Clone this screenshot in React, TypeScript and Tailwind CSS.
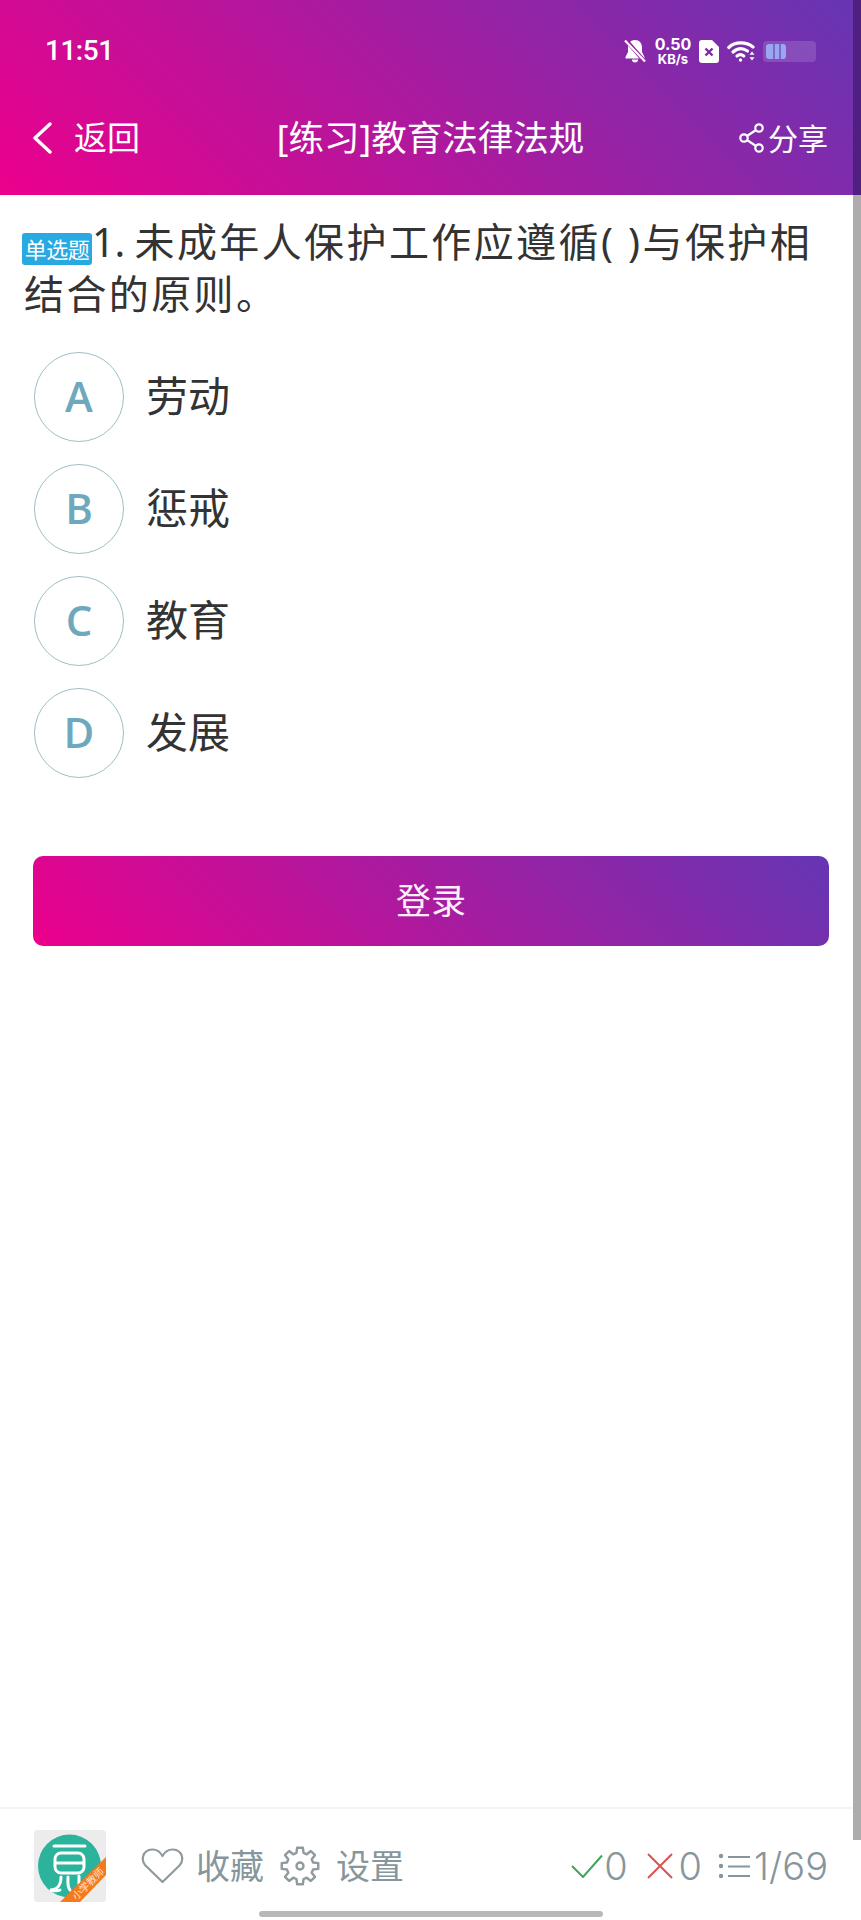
const cjk = "font-['Noto_Sans','Noto_Sans_CJK_SC',sans-serif]";

function BellOff() {
  return (
    <svg width="22" height="24" viewBox="0 0 22 24" fill="white">
      <path d="M11 1C6.500 1 4 4.500 4 8.500V13L1.500 18v1.500h19V18L18 13V8.500C18 4.500 15.500 1 11 1z" />
      <path d="M8 20.500a3 3 0 0 0 6 0z" />
      <path d="M1 0l20 23" stroke="#9a209c" strokeWidth="4" />
      <path d="M1 1.500l20 21" stroke="white" strokeWidth="2.200" />
    </svg>
  );
}

function Sim() {
  return (
    <svg width="20" height="23" viewBox="0 0 20 23">
      <path d="M3 0h10l7 7v13a3 3 0 0 1-3 3H3a3 3 0 0 1-3-3V3a3 3 0 0 1 3-3z" fill="white" />
      <path d="M6.500 8.500l7 7M13.500 8.500l-7 7" stroke="#7c2aa6" strokeWidth="2.400" />
    </svg>
  );
}

function Wifi() {
  return (
    <svg width="28" height="22" viewBox="0 0 28 22" fill="none" stroke="white" strokeWidth="3.200" strokeLinecap="round">
      <path d="M1.800 7.500C8 1.500 19 1.500 26 7" />
      <path d="M6 12c4.500-4 10-4 14.500-1" />
      <path d="M10 16c2.200-1.700 4.500-1.700 6.800 0" />
      <circle cx="13.500" cy="20" r="1.700" fill="white" stroke="none" />
      <path d="M25 11.500l-2.500 3.200h5zM25 20.500l-2.500-3.200h5z" fill="white" stroke="none" />
    </svg>
  );
}

function Battery() {
  return (
    <svg width="53" height="21" viewBox="0 0 53 21">
      <rect width="53" height="21" rx="4" fill="white" fillOpacity="0.14" />
      <rect x="3" y="3" width="20" height="15" rx="3" fill="#9aa6f0" />
      <rect x="10" y="3" width="2" height="15" fill="#7a68d0" />
      <rect x="16" y="3" width="2" height="15" fill="#7a68d0" />
    </svg>
  );
}

function Logo() {
  return (
    <svg width="72" height="72" viewBox="0 0 72 72" className="shrink-0">
      <rect width="72" height="72" rx="4" fill="#ececec" />
      <circle cx="35.500" cy="36" r="31.500" fill="#2bb39b" />
      <g fill="none" stroke="white" strokeWidth="3" strokeLinecap="round">
        <path d="M20 16h31" />
        <rect x="21" y="23" width="29" height="20" rx="6" />
        <path d="M22 33h27" />
        <path d="M27 47c0 8-4 13-11 13c4 1 8 1 10 0" />
        <path d="M34 47c0 6-1 9 2 13M45 46v7c0 3 1 4 3 4" />
      </g>
      <path d="M72 27L26 72H46L72 45z" fill="#f47a1c" />
      <text x="0" y="0" transform="translate(42.500 70.500) rotate(-45)" fontSize="10" fill="#ffe6d2" fontFamily="Noto Sans CJK SC">小学教师</text>
    </svg>
  );
}

function Gear() {
  const teeth = 8;
  const pts: string[] = [];
  for (let i = 0; i < teeth; i++) {
    const a = (i * 360) / teeth - 90;
    const seq: [number, number][] = [
      [13.5, a - 15],
      [18.5, a - 9],
      [18.5, a + 9],
      [13.5, a + 15],
    ];
    for (const [r, d] of seq) {
      const t = (d * Math.PI) / 180;
      pts.push(`${(20 + r * Math.cos(t)).toFixed(2)},${(20 + r * Math.sin(t)).toFixed(2)}`);
    }
  }
  return (
    <svg width="40" height="40" viewBox="0 0 40 40" fill="none" stroke="#8f9a9e" strokeWidth="2.400" strokeLinejoin="round" className="ml-[16px]">
      <polygon points={pts.join(" ")} />
      <circle cx="20" cy="20" r="3.500" />
    </svg>
  );
}

function Heart() {
  return (
    <svg width="43" height="36" viewBox="0 0 43 36" fill="none" stroke="#8f9a9e" strokeWidth="2.200" strokeLinejoin="round">
      <path d="M21.500 34L4.500 17.500C-.500 12 1.500 2 11 1.500c4.500-.2 8 2 10.500 6.500C24 3.500 27.500 1.300 32 1.500c9.500.5 11.500 10.500 6.500 16z" />
    </svg>
  );
}

function CheckIcon() {
  return (
    <svg width="32" height="24" viewBox="0 0 32 24" fill="none" stroke="#3fa45a" strokeWidth="2">
      <path d="M1 12l11 11L31 1.500" />
    </svg>
  );
}

function CrossIcon() {
  return (
    <svg width="26" height="26" viewBox="0 0 26 26" fill="none" stroke="#d9534f" strokeWidth="2">
      <path d="M1 1l24 24M25 1L1 25" />
    </svg>
  );
}

function ListIcon() {
  return (
    <svg width="32" height="26" viewBox="0 0 32 26" fill="none" stroke="#87969c" strokeWidth="2">
      <circle cx="3" cy="3" r="2.200" fill="#87969c" stroke="none" />
      <circle cx="3" cy="13" r="2.200" fill="#87969c" stroke="none" />
      <circle cx="3" cy="23" r="2.200" fill="#87969c" stroke="none" />
      <path d="M10 4h22M10 13.500h22M10 23h22" />
    </svg>
  );
}

const options = [
  ["A", "劳动"],
  ["B", "惩戒"],
  ["C", "教育"],
  ["D", "发展"],
];

export default function App() {
  return (
    <div className={`relative flex h-[1920px] w-full flex-col overflow-hidden bg-white ${cjk}`}>
      <header className="flex h-[195px] flex-col bg-[linear-gradient(45deg,#ec008c,#6536b3)] text-white">
        <div className="flex h-[102px] items-center justify-between px-[45px]">
          <span className="font-['Roboto',sans-serif] text-[28px] font-medium tracking-[-0.500px]">11:51</span>
          <div className="flex items-center">
            <BellOff />
            <div className="ml-[8px] flex w-[38px] flex-col items-center font-['Inter',sans-serif] font-bold leading-none">
              <span className="text-[16px] leading-[17px]">0.50</span>
              <span className="text-[13px] leading-[13px]">KB/s</span>
            </div>
            <div className="ml-[7px]"><Sim /></div>
            <div className="ml-[8px]"><Wifi /></div>
            <div className="ml-[8px]"><Battery /></div>
          </div>
        </div>
        <div className="grid h-[72px] grid-cols-[1fr_auto_1fr] items-center">
          <div className="flex items-center pl-[32px]">
            <svg width="20" height="32" viewBox="0 0 20 32" fill="none" stroke="white" strokeWidth="3.400" strokeLinecap="round" strokeLinejoin="round">
              <path d="M18 2L3 16l15 14" />
            </svg>
            <span className="ml-[22px] text-[33px]">返回</span>
          </div>
          <span className="text-[35.500px]">[练习]教育法律法规</span>
          <div className="flex items-center justify-end pr-[33px]">
            <svg width="25" height="30" viewBox="0 0 25 30" fill="none" stroke="white" strokeWidth="2.200">
              <circle cx="20" cy="5" r="3.700" />
              <circle cx="5" cy="15" r="3.700" />
              <circle cx="20" cy="25" r="3.700" />
              <path d="M8 13L17 7M8 17l9 6" />
            </svg>
            <span className="ml-[4px] text-[30px]">分享</span>
          </div>
        </div>
      </header>

      <main className="flex-1 px-[24px] pt-[21px]">
        <p className="text-[40px] leading-[52px] tracking-[2.400px] text-[#333333]">
          <span className="ml-[-2px] inline-block h-[32px] w-[70px] rounded-[3px] bg-[#29a9e1] text-center align-[-1px] text-[22px] leading-[32px] tracking-[-0.500px] text-white">单选题</span>
          <span className="tracking-[-0.500px]">1. </span>未成年人保护工作应遵循( )与保护相结合的原则。
        </p>
        <div className="mt-[32px] flex flex-col gap-[22px] pl-[10px]">
          {options.map(([k, v]) => (
            <div key={k} className="flex items-center">
              <div className="flex h-[90px] w-[90px] items-center justify-center rounded-full border border-[#9dbfc4] pb-[3px] font-['Open_Sans',sans-serif] text-[42px] font-semibold text-[#6ea8bd]">{k}</div>
              <span className="ml-[22px] pb-[3px] text-[42px] text-[#333333]">{v}</span>
            </div>
          ))}
        </div>
        <button className="ml-[9px] mt-[78px] block h-[90px] w-[796px] rounded-[10px] bg-[linear-gradient(45deg,#ec008c,#6536b3)] text-[35px] text-[#fdeef8]">登录</button>
      </main>

      <footer className="flex h-[113px] items-start border-t-2 border-[#f4f4f4] pl-[34px] pr-[33px] pt-[21px] text-[#87969c]">
        <Logo />
        <div className="ml-[35px] mt-[13px] flex items-center">
          <Heart />
          <span className="ml-[12px] text-[34px] leading-[46px]">收藏</span>
          <Gear />
          <span className="ml-[16px] text-[34px] leading-[46px]">设置</span>
        </div>
        <div className="ml-auto mt-[13px] flex items-center font-['Inter',sans-serif] text-[38px] font-light leading-[46px]">
          <CheckIcon />
          <span className="ml-[1px]">0</span>
          <div className="ml-[19px]"><CrossIcon /></div>
          <span className="ml-[6px]">0</span>
          <div className="ml-[16px]"><ListIcon /></div>
          <span className="ml-[4px]">1/69</span>
        </div>
      </footer>

      <div className="absolute right-0 top-0 h-[195px] w-[8px] bg-[#4f2080]" />
      <div className="absolute right-0 top-[195px] h-[1645px] w-[8px] bg-[#adadad]" />
      <div className="absolute bottom-[3px] left-[259px] h-[6px] w-[344px] rounded-full bg-[#b8b8b8]" />
    </div>
  );
}
